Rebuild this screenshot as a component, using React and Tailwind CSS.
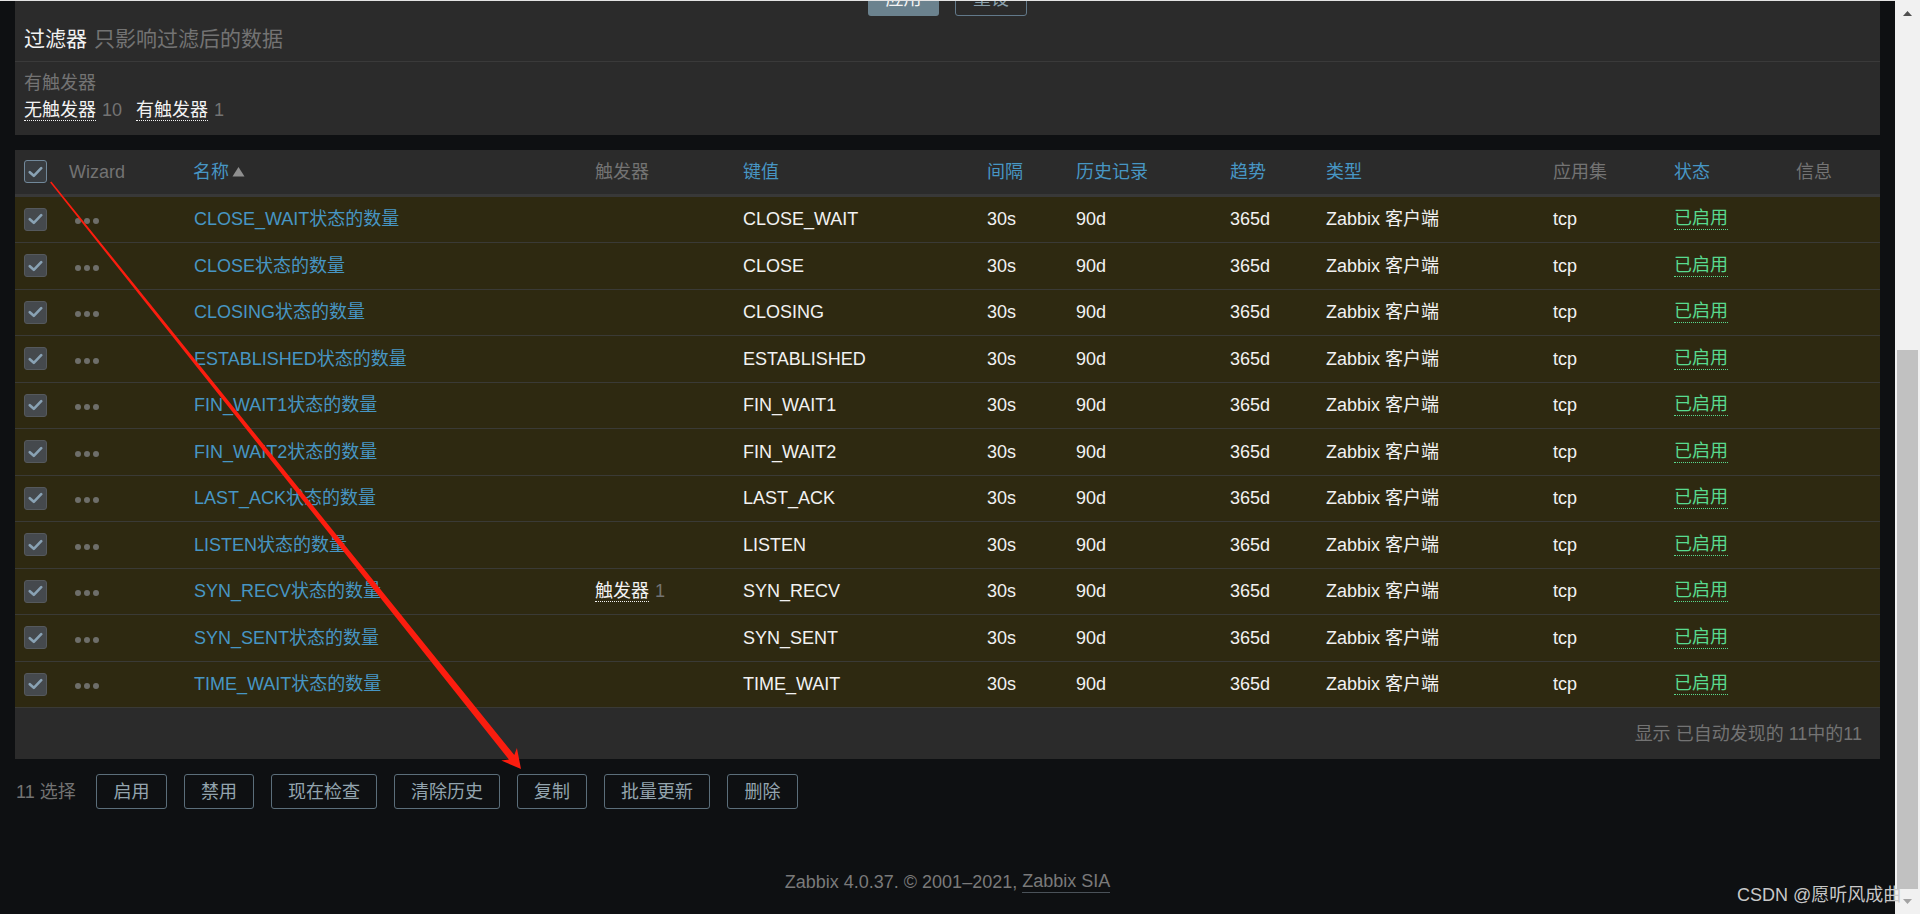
import React from "react";

const FONT = "font-['Liberation_Sans','Noto_Sans_CJK_SC',sans-serif]";

const GRID =
  "grid grid-cols-[45px_124px_402px_148px_244px_89px_154px_96px_227px_121px_122px_1fr]";

const keys = [
  "CLOSE_WAIT",
  "CLOSE",
  "CLOSING",
  "ESTABLISHED",
  "FIN_WAIT1",
  "FIN_WAIT2",
  "LAST_ACK",
  "LISTEN",
  "SYN_RECV",
  "SYN_SENT",
  "TIME_WAIT",
];

function Check({ header }) {
  return (
    <div
      className={
        header
          ? "w-[23px] h-[23px] rounded-[3px] border border-[#71889a] bg-[#393d41] flex items-center justify-center"
          : "w-[23px] h-[23px] rounded-[3px] border border-[#55595d] bg-[#45494d] flex items-center justify-center"
      }
    >
      <svg width="15" height="12" viewBox="0 0 15 12">
        <path
          d="M1.8 6.2 L5.8 9.8 L13.2 2.2"
          fill="none"
          stroke="#89a2b4"
          strokeWidth="2.6"
          strokeLinecap="round"
          strokeLinejoin="round"
        />
      </svg>
    </div>
  );
}

function Dots() {
  return (
    <div className="flex gap-[3px] mt-[4px]">
      <span className="w-[6px] h-[6px] rounded-full bg-[#6e6e6a]" />
      <span className="w-[6px] h-[6px] rounded-full bg-[#6e6e6a]" />
      <span className="w-[6px] h-[6px] rounded-full bg-[#6e6e6a]" />
    </div>
  );
}

function Btn({ children, w }) {
  return (
    <button
      className={`h-[35px] ${w} flex items-center justify-center rounded-[3px] border border-[#5b6e7a] text-[#93a4ae] text-[18px] leading-[22px] whitespace-nowrap`}
    >
      {children}
    </button>
  );
}

export default function App() {
  return (
    <div
      className={`relative flex w-[1920px] h-[914px] overflow-hidden bg-[#0e1012] ${FONT} text-[18px] leading-[22px]`}
    >
      {/* main column */}
      <div className="w-[1895px] shrink-0 flex flex-col border-t border-[#e4e4e4] overflow-hidden">
        <div className="flex flex-col -mt-[20px]">
          {/* filter panel */}
          <div className="mx-[15px] bg-[#2b2b2b]">
            <div className="flex justify-center gap-[16px]">
              <button className="h-[35px] w-[71px] rounded-[3px] bg-[#6b828e] text-[#f4f4f4] text-[18px]">
                应用
              </button>
              <button className="h-[35px] w-[72px] rounded-[3px] border border-[#62798a] text-[#8aa0ac] text-[18px]">
                重设
              </button>
            </div>
            <div className="h-[45px] flex items-center pl-[9px] text-[21px] leading-[26px]">
              <span className="text-[#f2f2f2]">过滤器</span>
              <span className="text-[#737373] ml-[7px]">只影响过滤后的数据</span>
            </div>
            <div className="border-t border-[#3a3a3a] pt-[8px] pb-[11px] pl-[9px]">
              <div className="h-[26px] flex items-center text-[#737373]">有触发器</div>
              <div className="h-[28px] flex items-center">
                <span className="text-[#f2f2f2] border-b border-dotted border-[#f2f2f2] leading-[20px]">
                  无触发器
                </span>
                <span className="text-[#737373] ml-[6px]">10</span>
                <span className="text-[#f2f2f2] border-b border-dotted border-[#f2f2f2] leading-[20px] ml-[14px]">
                  有触发器
                </span>
                <span className="text-[#737373] ml-[6px]">1</span>
              </div>
            </div>
          </div>

          {/* table panel */}
          <div className="mx-[15px] mt-[15px] bg-[#2b2b2b]">
            <div
              className={`${GRID} h-[46.5px] items-center border-b-[3px] border-[#383838] whitespace-nowrap`}
            >
              <div className="pl-[9px]">
                <Check header />
              </div>
              <div className="pl-[9px] text-[#737373]">Wizard</div>
              <div className="pl-[9px] flex items-center text-[#4796c4]">
                名称
                <svg width="13" height="11" viewBox="0 0 13 11" className="ml-[3px]">
                  <path d="M0.5 10.5 L6.5 1 L12.5 10.5 Z" fill="#8f8f8f" />
                </svg>
              </div>
              <div className="pl-[9px] text-[#737373]">触发器</div>
              <div className="pl-[9px] text-[#4796c4]">键值</div>
              <div className="pl-[9px] text-[#4796c4]">间隔</div>
              <div className="pl-[9px] text-[#4796c4]">历史记录</div>
              <div className="pl-[9px] text-[#4796c4]">趋势</div>
              <div className="pl-[9px] text-[#4796c4]">类型</div>
              <div className="pl-[9px] text-[#737373]">应用集</div>
              <div className="pl-[9px] text-[#4796c4]">状态</div>
              <div className="pl-[9px] text-[#737373]">信息</div>
            </div>

            {keys.map((k) => (
              <div
                key={k}
                className={`${GRID} h-[46.5px] items-center border-b border-[#3a3a36] bg-[#2e2911] text-[#f2f2f2] whitespace-nowrap`}
              >
                <div className="pl-[9px]">
                  <Check />
                </div>
                <div className="pl-[15px]">
                  <Dots />
                </div>
                <div className="pl-[10px] text-[#4796c4]">{k}状态的数量</div>
                <div className="pl-[9px] flex items-center">
                  {k === "SYN_RECV" && (
                    <>
                      <span className="border-b border-dotted border-[#f2f2f2] leading-[20px]">
                        触发器
                      </span>
                      <span className="text-[#737373] ml-[6px]">1</span>
                    </>
                  )}
                </div>
                <div className="pl-[9px]">{k}</div>
                <div className="pl-[9px]">30s</div>
                <div className="pl-[9px]">90d</div>
                <div className="pl-[9px]">365d</div>
                <div className="pl-[9px]">Zabbix 客户端</div>
                <div className="pl-[9px]">tcp</div>
                <div className="pl-[9px] flex">
                  <span className="text-[#59db8f] border-b border-dotted border-[#59db8f] leading-[21px]">
                    已启用
                  </span>
                </div>
                <div className="pl-[9px]" />
              </div>
            ))}

            <div className="h-[51px] flex items-center justify-end pr-[18px] text-[#737373]">
              显示 已自动发现的 11中的11
            </div>
          </div>

          {/* action buttons */}
          <div className="mt-[15px] h-[35px] flex items-center pl-[16px]">
            <span className="text-[#737373] w-[80px]">11 选择</span>
            <div className="flex gap-[17px]">
              <Btn w="w-[71px]">启用</Btn>
              <Btn w="w-[70px]">禁用</Btn>
              <Btn w="w-[106px]">现在检查</Btn>
              <Btn w="w-[106px]">清除历史</Btn>
              <Btn w="w-[70px]">复制</Btn>
              <Btn w="w-[106px]">批量更新</Btn>
              <Btn w="w-[71px]">删除</Btn>
            </div>
          </div>

          {/* footer */}
          <div className="mt-[61px] h-[24px] flex items-center justify-center text-[#7a7a7a]">
            <span>Zabbix 4.0.37. © 2001–2021,&nbsp;</span>
            <span className="border-b border-[#4a5259] leading-[21px]">Zabbix SIA</span>
          </div>
        </div>
      </div>

      {/* scrollbar */}
      <div className="w-[25px] shrink-0 bg-[#f1f1f1] flex flex-col items-center">
        <div className="h-[26px] flex items-center justify-center">
          <svg width="9" height="5" viewBox="0 0 9 5">
            <path d="M0 5 L4.5 0 L9 5 Z" fill="#505050" />
          </svg>
        </div>
        <div className="h-[324px]" />
        <div className="w-[21px] h-[539px] bg-[#c1c1c1]" />
        <div className="flex-1 flex items-center justify-center">
          <svg width="9" height="5" viewBox="0 0 9 5">
            <path d="M0 0 L4.5 5 L9 0 Z" fill="#a3a3a3" />
          </svg>
        </div>
      </div>

      {/* watermark */}
      <div className="absolute left-[1737px] top-[884px] text-[18px] leading-[22px] text-[#c8c8c8] whitespace-nowrap">
        CSDN @愿听风成曲
      </div>

      {/* red annotation arrow */}
      <svg
        className="absolute left-0 top-0 pointer-events-none"
        width="1920"
        height="914"
        viewBox="0 0 1920 914"
      >
        <polygon
          points="50.1,182.5 508.9,759.5 501.3,760.5 521,769 516.9,747.9 514.3,755.1 51.3,181.5"
          fill="#fb1d0f"
        />
      </svg>
    </div>
  );
}
